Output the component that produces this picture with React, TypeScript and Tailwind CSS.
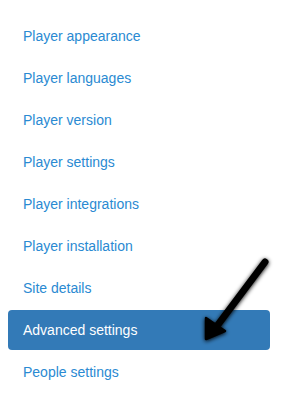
const ITEMS = [
  "Player appearance",
  "Player languages",
  "Player version",
  "Player settings",
  "Player integrations",
  "Player installation",
  "Site details",
  "Advanced settings",
  "People settings",
];

const ACTIVE = "Advanced settings";

export default function App() {
  return (
    <div className="relative w-[291px] h-[395px] bg-white font-['Liberation_Sans',Arial,sans-serif] text-[14px]">
      <ul className="flex flex-col gap-[2px] pt-[16px] pl-[8px] w-[270px]">
        {ITEMS.map((item) => (
          <li key={item}>
            <a
              href="#"
              className={
                item === ACTIVE
                  ? "block rounded-[4px] bg-[#337ab7] px-[15px] py-[10px] leading-[20px] text-white"
                  : "block px-[15px] py-[10px] leading-[20px] text-[#2a8ad2]"
              }
            >
              {item}
            </a>
          </li>
        ))}
      </ul>

      {/* annotation arrow */}
      <svg className="absolute left-0 top-0" width="291" height="395" viewBox="0 0 291 395">
        <defs>
          <filter id="shadow" x="-50%" y="-50%" width="200%" height="200%">
            <feGaussianBlur in="SourceAlpha" stdDeviation="2" />
            <feOffset dx="0" dy="1" result="b" />
            <feMerge>
              <feMergeNode in="b" />
              <feMergeNode in="SourceGraphic" />
            </feMerge>
          </filter>
        </defs>
        <g filter="url(#shadow)">
          <line x1="265" y1="262" x2="214" y2="330" stroke="#000" strokeWidth="7" strokeLinecap="round" />
          <polygon points="206,339 206,318 225,331" fill="#000" stroke="#000" strokeWidth="2.5" strokeLinejoin="round" />
        </g>
      </svg>
    </div>
  );
}
